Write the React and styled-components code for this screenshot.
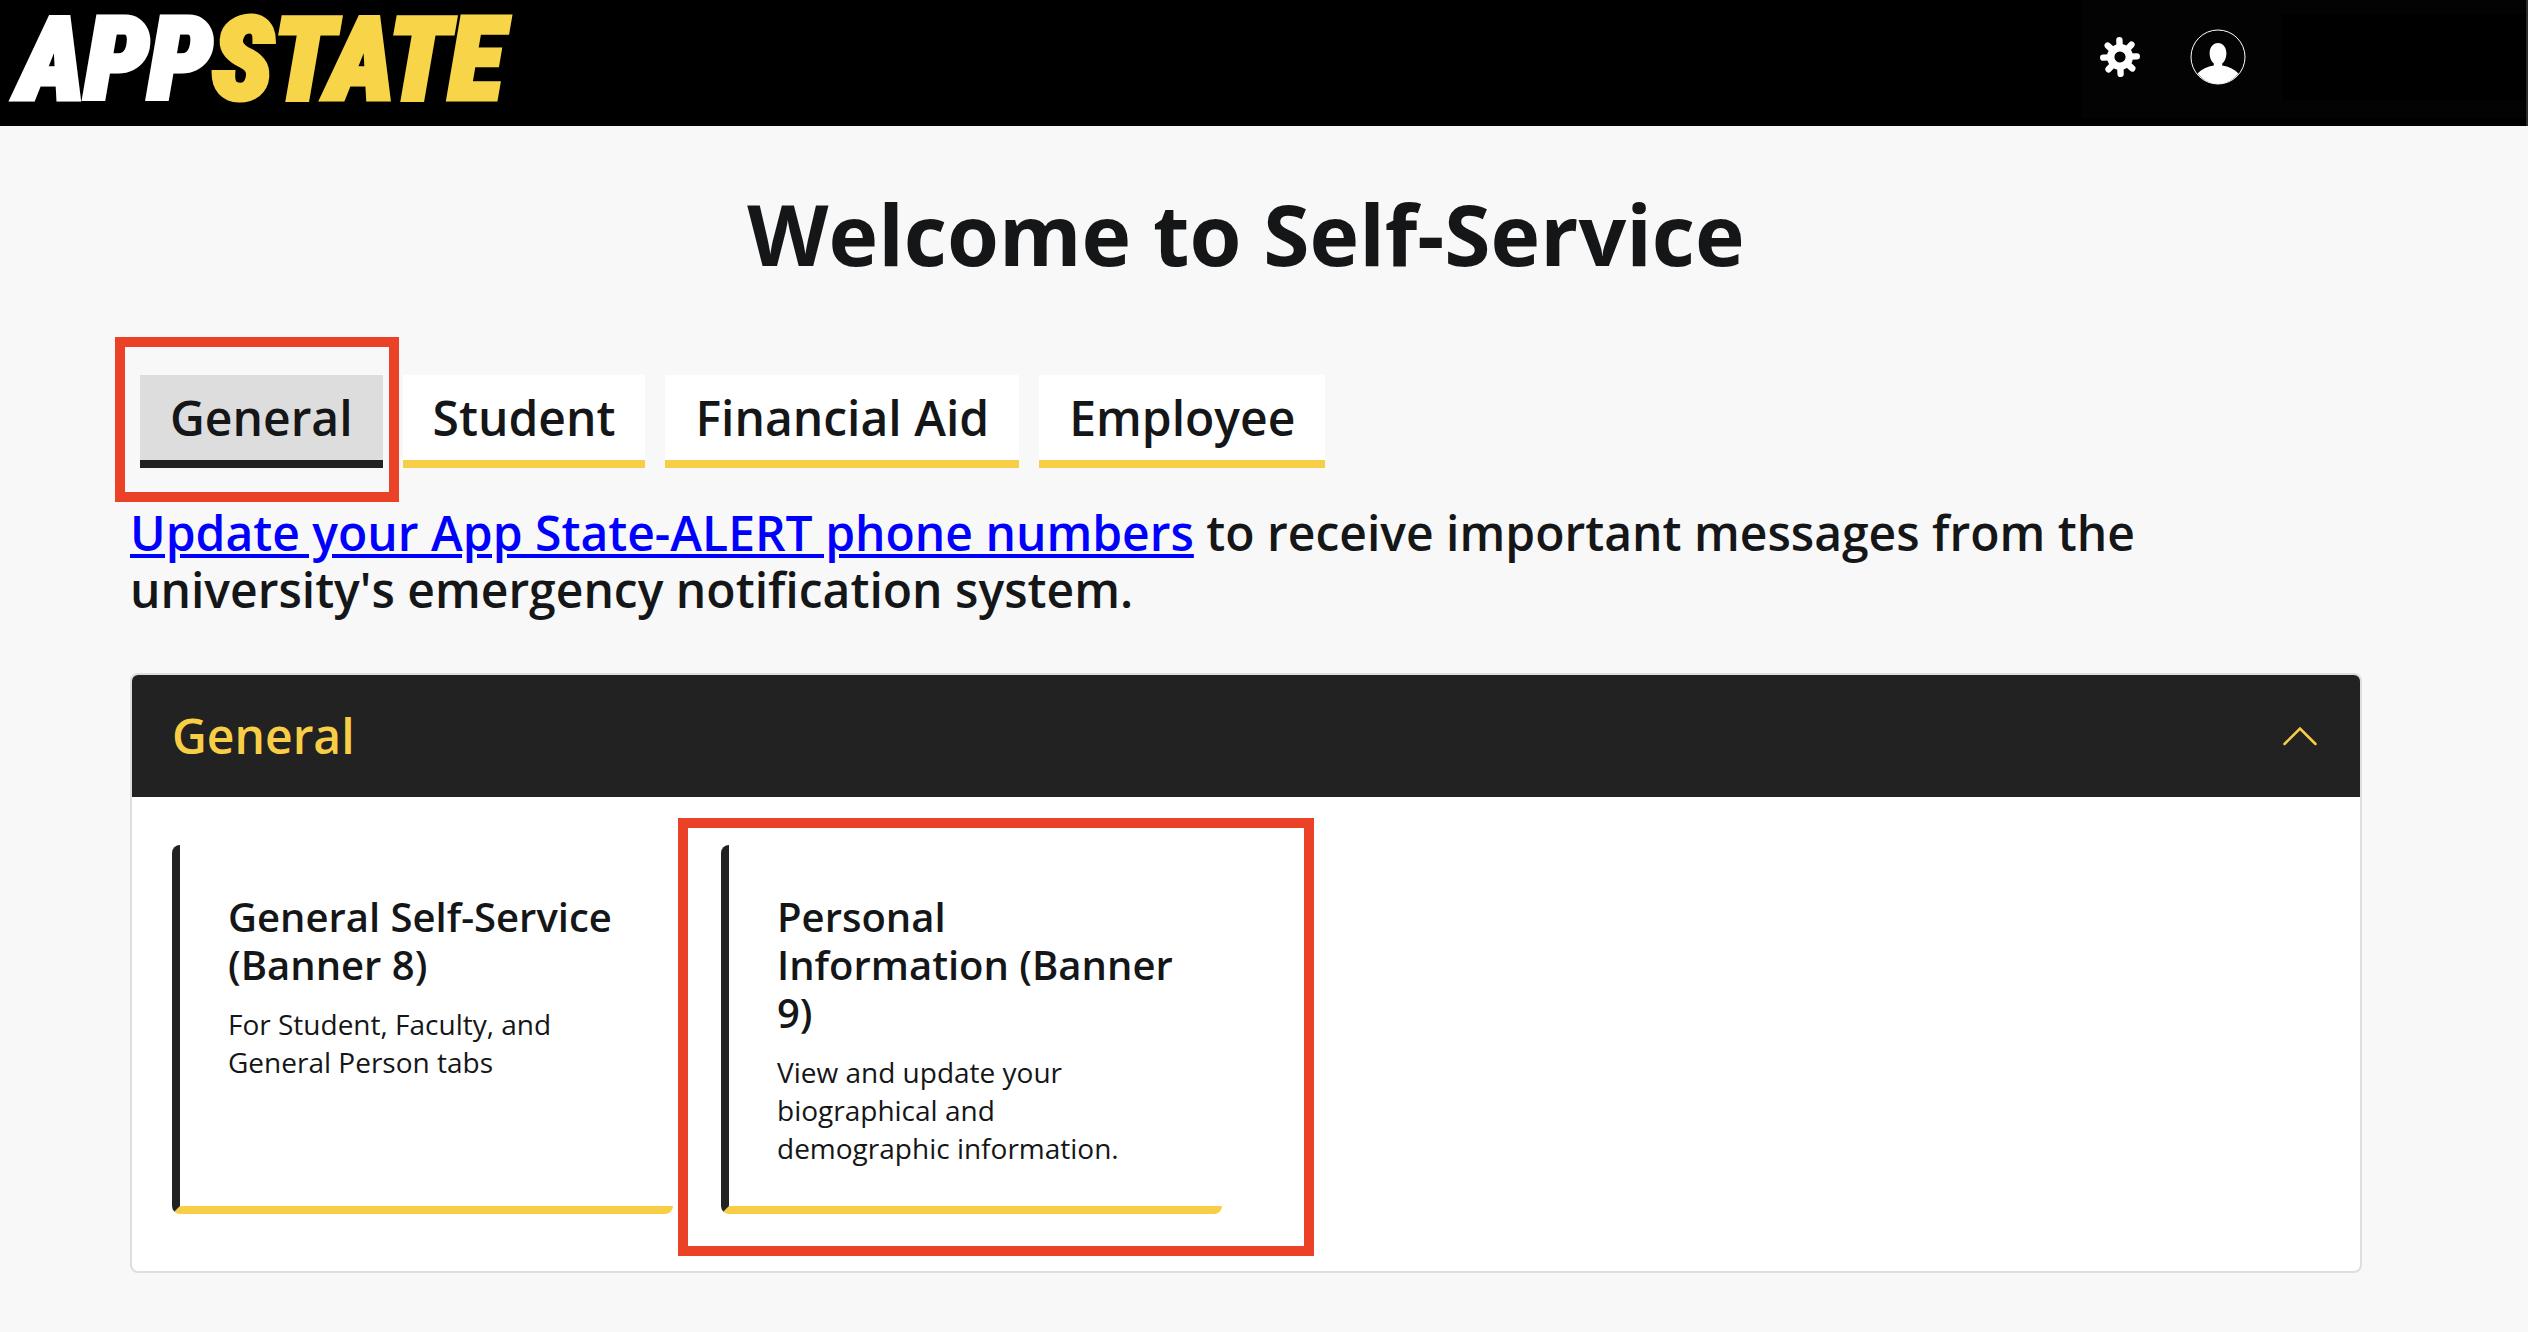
import React, { useState } from "react";
import styled, { createGlobalStyle } from "styled-components";

const GlobalStyle = createGlobalStyle`
  *, *::before, *::after { box-sizing: border-box; }
  body {
    margin: 0;
    background: #f8f8f8;
    color: #151618;
    font-family: "Open Sans", "Noto Sans", sans-serif;
  }
  h1, h2, h3, p { margin: 0; }
`;

const Header = styled.header`
  display: flex;
  justify-content: space-between;
  height: 126px;
  background: #000;
  border-right: 2px solid #2b2b2b;
`;

const Logo = styled.a`
  padding-left: 18px;
  color: #fff;
  font-family: "Roboto Condensed", "Liberation Sans Narrow", Roboto, sans-serif;
  font-size: 114px;
  font-style: italic;
  font-weight: 900;
  line-height: 120px;
  text-decoration: none;
  -webkit-text-stroke: 5px currentColor;
`;

const LogoAccent = styled.span`
  color: #f8d448;
`;

const HeaderTools = styled.div`
  display: flex;
  align-items: center;
  gap: 50px;
  height: 118px;
  padding: 0 0 5px 18px;
  background: #030303;
`;

const IconButton = styled.button`
  display: flex;
  padding: 0;
  border: 0;
  background: none;
  color: #fff;
  cursor: pointer;
`;

const UserName = styled.div`
  width: 244px;
  height: 86px;
  margin-left: -14px;
  background: #000;
`;

const Main = styled.main`
  padding: 56px 166px 0 130px;
`;

const PageTitle = styled.h1`
  font-size: 84px;
  font-weight: 700;
  line-height: 104px;
  text-align: center;
`;

const Tabs = styled.nav`
  display: flex;
  gap: 20px;
  margin: 89px 0 36px;
  padding-left: 10px;
`;

const Marked = styled.div`
  position: relative;
  &::after {
    content: "";
    position: absolute;
    inset: ${(p) => p.$inset};
    border: 10px solid #eb4126;
    pointer-events: none;
  }
`;

const Tab = styled.button`
  padding: 13px 30px 12px;
  border: 0;
  border-bottom: 8px solid ${(p) => (p.$active ? "#222" : "#f8ce46")};
  background: ${(p) => (p.$active ? "#ddd" : "#fff")};
  color: inherit;
  font: 600 48px/60px "Open Sans", "Noto Sans", sans-serif;
  cursor: pointer;
`;

const Alert = styled.p`
  font-size: 48px;
  font-weight: 600;
  line-height: 57px;
`;

const AlertLink = styled.a`
  color: #00f;
`;

const Panel = styled.section`
  margin-top: 55px;
  border: 2px solid #dedede;
  border-radius: 8px;
  background: #fff;
  overflow: hidden;
`;

const PanelHeader = styled.button`
  display: flex;
  align-items: center;
  justify-content: space-between;
  width: 100%;
  padding: 31px 43px 31px 40px;
  border: 0;
  background: #222;
  color: #f8ce46;
  font: 600 48px/60px "Open Sans", "Noto Sans", sans-serif;
  cursor: pointer;
`;

const Cards = styled.div`
  display: flex;
  gap: 48px;
  padding: 48px 40px 57px;
`;

const Card = styled.a`
  display: block;
  width: 501px;
  height: 369px;
  padding: 48px 48px 0;
  border-bottom: 8px solid #f8ce46;
  border-left: 8px solid #222;
  border-radius: 8px;
  color: inherit;
  text-decoration: none;
`;

const CardTitle = styled.h3`
  font-size: 40px;
  font-weight: 600;
  line-height: 48px;
`;

const CardText = styled.p`
  margin-top: 16px;
  font-size: 28px;
  line-height: 38px;
`;

const TEETH = [0, 45, 90, 135, 180, 225, 270, 315];

function GearIcon() {
  return (
    <svg width="40" height="40" viewBox="0 0 40 40" aria-hidden="true">
      <g transform="rotate(-2 20 20)">
        {TEETH.map((a) => (
          <path key={a} d="M20 10V3.2" stroke="#fff" strokeWidth="6.4" strokeLinecap="round" transform={`rotate(${a} 20 20)`} />
        ))}
        <circle cx="20" cy="20" r="9.3" fill="none" stroke="#fff" strokeWidth="7.4" />
      </g>
    </svg>
  );
}

function AvatarIcon() {
  return (
    <svg width="56" height="56" viewBox="0 0 56 56" aria-hidden="true">
      <circle cx="28" cy="28" r="27" fill="none" stroke="#fff" strokeWidth="1" />
      <path
        fill="#fff"
        d="M28 14c5 0 8.400 4.600 8.400 10.500 0 4.300-1.600 8-4.200 9.900v2.200c6.500 1 12 3.600 16.300 7.900A27 27 0 0 1 28 55 27 27 0 0 1 7.500 44.500c4.300-4.300 9.800-6.900 16.300-7.900v-2.200c-2.600-1.900-4.200-5.600-4.200-9.900C19.600 18.600 23 14 28 14z"
      />
    </svg>
  );
}

function Chevron({ open }) {
  return (
    <svg width="34" height="20" viewBox="0 0 34 20" fill="none" stroke="#f8ce46" strokeWidth="2.500" strokeLinecap="round" aria-hidden="true">
      <path d={open ? "M1.500 18 17 2.500 32.500 18" : "M1.500 2.500 17 18 32.500 2.500"} />
    </svg>
  );
}

const TABS = ["General", "Student", "Financial Aid", "Employee"];

const CARDS = [
  { title: "General Self-Service (Banner 8)", text: "For Student, Faculty, and General Person tabs" },
  { title: "Personal Information (Banner 9)", text: "View and update your biographical and demographic information.", marked: true },
];

export default function App() {
  const [tab, setTab] = useState("General");
  const [open, setOpen] = useState(true);

  return (
    <>
      <GlobalStyle />
      <Header>
        <Logo href="#">APP<LogoAccent>STATE</LogoAccent></Logo>
        <HeaderTools>
          <IconButton type="button" aria-label="Settings"><GearIcon /></IconButton>
          <IconButton type="button" aria-label="Profile"><AvatarIcon /></IconButton>
          <UserName />
        </HeaderTools>
      </Header>
      <Main>
        <PageTitle>Welcome to Self-Service</PageTitle>
        <Tabs>
          {TABS.map((name) => {
            const button = (
              <Tab key={name} type="button" $active={name === tab} onClick={() => setTab(name)}>
                {name}
              </Tab>
            );
            return name === "General" ? <Marked key={name} $inset="-38px -16px -34px -25px">{button}</Marked> : button;
          })}
        </Tabs>
        <Alert>
          <AlertLink href="#">Update your App State-ALERT phone numbers</AlertLink> to receive important messages from the
          university's emergency notification system.
        </Alert>
        <Panel>
          <h2>
            <PanelHeader type="button" aria-expanded={open} onClick={() => setOpen(!open)}>
              General
              <Chevron open={open} />
            </PanelHeader>
          </h2>
          {open && (
            <Cards>
              {CARDS.map(({ title, text, marked }) => {
                const card = (
                  <Card key={title} href="#">
                    <CardTitle>{title}</CardTitle>
                    <CardText>{text}</CardText>
                  </Card>
                );
                return marked ? <Marked key={title} $inset="-27px -92px -42px -43px">{card}</Marked> : card;
              })}
            </Cards>
          )}
        </Panel>
      </Main>
    </>
  );
}
